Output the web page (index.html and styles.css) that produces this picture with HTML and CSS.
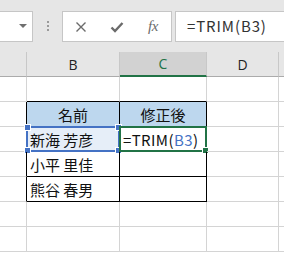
FILE: index.html
```html
<!DOCTYPE html>
<html>
<head>
<meta charset="utf-8">
<link rel="stylesheet" href="styles.css">
</head>
<body>
<div class="app">
  <div class="toolbar">
    <div class="namebox"><span class="arrow"></span></div>
    <div class="grip"><i></i><i></i><i></i></div>
    <div class="fxbox">
      <span class="slot">
        <svg width="12" height="12" viewBox="0 0 12 12"><path d="M1.5 1.5 L10.5 10.5 M10.5 1.5 L1.5 10.5" stroke="#6b6b6b" stroke-width="1.4" fill="none"/></svg>
      </span>
      <span class="slot">
        <svg width="14" height="12" viewBox="0 0 14 12"><path d="M1.5 6.5 L5 10 L12.5 2" stroke="#6b6b6b" stroke-width="2.4" fill="none"/></svg>
      </span>
      <span class="slot"><span class="fx">fx</span></span>
    </div>
    <div class="formula">=TRIM(B3)</div>
  </div>
  <div class="sheet">
    <div class="hd"></div>
    <div class="hd">B</div>
    <div class="hd sel">C</div>
    <div class="hd">D</div>
    <div class="hd last"></div>

    <div class="c"></div>
    <div class="c tb"></div>
    <div class="c tb"></div>
    <div class="c"></div>
    <div class="c"></div>

    <div class="c tl"></div>
    <div class="c t head">名前</div>
    <div class="c t head">修正後</div>
    <div class="c"></div>
    <div class="c"></div>

    <div class="c tl"></div>
    <div class="c t ref">新海 芳彦
      <span class="refbox"><i class="h h1"></i><i class="h h2"></i><i class="h h3"></i><i class="h h4"></i></span>
    </div>
    <div class="c t act">=TRIM(<span class="blue">B3</span>)
      <span class="actbox"><i class="fill"></i></span>
    </div>
    <div class="c"></div>
    <div class="c"></div>

    <div class="c tl"></div>
    <div class="c t">小平 里佳</div>
    <div class="c t"></div>
    <div class="c"></div>
    <div class="c"></div>

    <div class="c tl"></div>
    <div class="c t">熊谷 春男</div>
    <div class="c t"></div>
    <div class="c"></div>
    <div class="c"></div>

    <div class="c"></div>
    <div class="c"></div>
    <div class="c"></div>
    <div class="c"></div>
    <div class="c"></div>

    <div class="c"></div>
    <div class="c"></div>
    <div class="c"></div>
    <div class="c"></div>
    <div class="c"></div>
  </div>
</div>
</body>
</html>
```

FILE: styles.css
```css
html, body {
  margin: 0;
  padding: 0;
}
body {
  width: 284px;
  height: 255px;
  overflow: hidden;
  background: #ffffff;
  font-family: "Noto Sans CJK JP", "Noto Sans", sans-serif;
}
.app {
  width: 284px;
  height: 255px;
  overflow: hidden;
}
.toolbar {
  box-sizing: border-box;
  height: 52px;
  background: #e6e6e6;
  display: flex;
  align-items: flex-start;
  padding-top: 11px;
  white-space: nowrap;
}
.namebox {
  box-sizing: border-box;
  width: 34px;
  height: 31px;
  margin-left: -1px;
  background: #fff;
  border: 1px solid #c6c6c6;
  position: relative;
  flex: none;
}
.arrow {
  position: absolute;
  left: 19px;
  top: 12px;
  width: 0;
  height: 0;
  border-left: 4px solid transparent;
  border-right: 4px solid transparent;
  border-top: 4px solid #6f6f6f;
}
.grip {
  flex: none;
  margin-left: 14px;
  margin-top: 10px;
  width: 3px;
  display: flex;
  flex-direction: column;
  gap: 2px;
}
.grip i {
  display: block;
  width: 2px;
  height: 2px;
  background: #9a9a9a;
}
.fxbox {
  flex: none;
  box-sizing: border-box;
  margin-left: 12px;
  width: 110px;
  height: 31px;
  background: #fff;
  border: 1px solid #c6c6c6;
  display: flex;
  align-items: center;
}
.slot {
  width: 36px;
  height: 29px;
  display: flex;
  align-items: center;
  justify-content: center;
}
.fx {
  font-family: "Liberation Serif", serif;
  font-style: italic;
  font-size: 15px;
  color: #6b6b6b;
  letter-spacing: -0.5px;
}
.formula {
  flex: none;
  box-sizing: border-box;
  margin-left: 3px;
  width: 130px;
  height: 31px;
  background: #fff;
  border: 1px solid #c6c6c6;
  font-size: 15px;
  color: #333;
  padding-left: 11px;
  line-height: 28px;
  letter-spacing: 0.9px;
}
.sheet {
  display: grid;
  grid-template-columns: 27px 93px 87px 72px 20px;
  grid-auto-rows: 25px;
}
.hd {
  box-sizing: border-box;
  background: #e6e6e6;
  border-right: 1px solid #c8c8c8;
  border-bottom: 1px solid #ababab;
  font-family: "Open Sans", "Noto Sans", sans-serif;
  font-size: 14px;
  color: #222;
  display: flex;
  align-items: center;
  justify-content: center;
}
.hd.sel {
  background: #d2d2d2;
  color: #217346;
  border-bottom: 2px solid #217346;
}
.c {
  box-sizing: border-box;
  border-right: 1px solid #d4d4d4;
  border-bottom: 1px solid #d4d4d4;
  font-size: 15px;
  color: #111;
  display: flex;
  align-items: center;
  padding-left: 3px;
  white-space: nowrap;
  position: relative;
}
.c.tb {
  border-bottom-color: #000;
}
.c.tl {
  border-right-color: #000;
}
.c.t {
  border-right-color: #000;
  border-bottom-color: #000;
}
.c.head {
  background: #bdd7ee;
  justify-content: center;
  padding-left: 0;
}
.c.ref {
  background: #e6eef8;
}
.refbox {
  position: absolute;
  left: -1px;
  top: -1px;
  right: -1px;
  bottom: -1px;
  border: 2px solid #4472c4;
}
.h {
  position: absolute;
  width: 5px;
  height: 5px;
  background: #4472c4;
  border: 1px solid #fff;
}
.h1 { left: -4px; top: -4px; }
.h2 { right: -4px; top: -4px; }
.h3 { left: -4px; bottom: -4px; }
.h4 { right: -4px; bottom: -4px; }
.c.act {
  padding-left: 3px;
  letter-spacing: 0.4px;
}
.blue {
  color: #4472c4;
}
.actbox {
  position: absolute;
  left: -1px;
  top: -1px;
  right: -1px;
  bottom: -1px;
  border: 2px solid #217346;
}
.fill {
  position: absolute;
  right: -4px;
  bottom: -4px;
  width: 5px;
  height: 5px;
  background: #217346;
  border: 1px solid #fff;
}
```
